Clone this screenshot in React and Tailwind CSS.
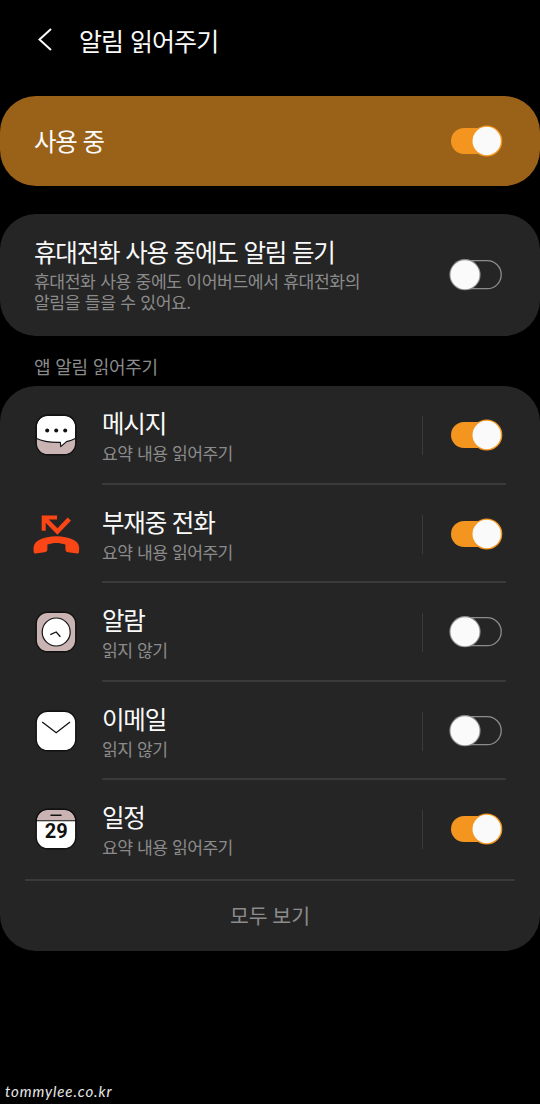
import React from 'react';

function Toggle({ on }) {
  return (
    <svg width="56" height="34" viewBox="0 0 56 34" className="block shrink-0">
      {on ? (
        <>
          <rect x="3" y="4" width="51" height="26" rx="13" fill="#f3951f" />
          <circle cx="38.7" cy="17" r="15.6" fill="#f3951f" />
          <circle cx="38.7" cy="17" r="14.2" fill="#fafafa" />
        </>
      ) : (
        <>
          <rect x="8" y="2.7" width="45.2" height="28" rx="14" fill="none" stroke="#8c8c8c" strokeWidth="1.3" />
          <circle cx="17" cy="16.7" r="15.6" fill="#8f8f8f" />
          <circle cx="17" cy="16.7" r="14.5" fill="#fafafa" />
        </>
      )}
    </svg>
  );
}

function MessageIcon() {
  return (
    <svg width="48" height="48" viewBox="0 0 48 48">
      <rect x="4.2" y="4.2" width="39.6" height="39.6" rx="11.5" fill="#c9b4b3" />
      <path d="M4.2 27.2V15.7a11.5 11.5 0 0 1 11.5-11.5h16.6a11.5 11.5 0 0 1 11.5 11.5v11.5c-3 1.6-6.1 2.7-9.3 3.4l-5.7 5-.5-4.3c-8.500.3-17.300-.7-24.300-4.100z" fill="#fff" stroke="#141414" strokeWidth="1.2" strokeLinejoin="round" />
      <rect x="4.2" y="4.2" width="39.6" height="39.6" rx="11.5" fill="none" stroke="#111" strokeWidth="1.4" />
      <circle cx="15.2" cy="19.5" r="2" fill="#111" />
      <circle cx="24.2" cy="19.5" r="2" fill="#111" />
      <circle cx="33.2" cy="19.5" r="2" fill="#111" />
    </svg>
  );
}

function MissedCallIcon() {
  return (
    <svg width="48" height="48" viewBox="0 0 48 48">
      <path d="M9.7 5.500H25v4H16.800L25.500 18.300 35.600 7.500 39 10.600 25.400 24.800 13.700 12.800V20.800H9.700z" fill="#fa4616" />
      <path d="M1.800 42c-.9-6.200.7-9.500 5.300-12 10-5 24.600-5 34.600 0 4.600 2.500 6.200 5.800 5.300 12-.1 1.200-1 1.700-2 1.500l-8.600-1.200c-2.300-.4-3-1.400-3-3.400V34.600c-5.700-2.200-12.300-2.200-18 0v4.300c0 2-.7 3-3 3.400L3.800 43.500c-1 .2-1.900-.3-2-1.500z" fill="#fa4616" />
    </svg>
  );
}

function AlarmIcon() {
  return (
    <svg width="48" height="48" viewBox="0 0 48 48">
      <rect x="4.2" y="4.2" width="39.6" height="39.6" rx="11.5" fill="#c9b4b3" stroke="#111" strokeWidth="1.4" />
      <circle cx="24.2" cy="24" r="14" fill="#fff" stroke="#111" strokeWidth="1.2" />
      <path d="M18.3 26.6l5.9-2.6 4.2 4.7" fill="none" stroke="#111" strokeWidth="1.3" />
    </svg>
  );
}

function MailIcon() {
  return (
    <svg width="48" height="48" viewBox="0 0 48 48">
      <rect x="4.2" y="4.2" width="39.6" height="39.6" rx="11.5" fill="#fff" stroke="#111" strokeWidth="1.4" />
      <path d="M10.2 15l14 10.8L38 15" fill="none" stroke="#111" strokeWidth="1.3" />
    </svg>
  );
}

function CalendarIcon() {
  return (
    <svg width="48" height="48" viewBox="0 0 48 48">
      <rect x="4.2" y="4.2" width="39.6" height="39.6" rx="11.5" fill="#fff" />
      <path d="M4.200 15.700a11.500 11.500 0 0 1 11.500-11.500h16.600a11.500 11.500 0 0 1 11.500 11.500z" fill="#c9b4b3" stroke="#111" strokeWidth="1.1" />
      <rect x="4.2" y="4.2" width="39.6" height="39.6" rx="11.5" fill="none" stroke="#111" strokeWidth="1.4" />
      <path d="M19 10.2h10" stroke="#111" strokeWidth="1.5" strokeLinecap="round" />
      <text x="24.2" y="32.600" textAnchor="middle" fontSize="20" fill="#111" className="font-['Roboto',sans-serif] font-bold">29</text>
    </svg>
  );
}

const rows = [
  { name: '메시지', note: '요약 내용 읽어주기', on: true, Icon: MessageIcon },
  { name: '부재중 전화', note: '요약 내용 읽어주기', on: true, Icon: MissedCallIcon },
  { name: '알람', note: '읽지 않기', on: false, Icon: AlarmIcon },
  { name: '이메일', note: '읽지 않기', on: false, Icon: MailIcon },
  { name: '일정', note: '요약 내용 읽어주기', on: true, Icon: CalendarIcon },
];

function AppRow({ name, note, on, Icon, last }) {
  return (
    <li className="flex h-[98.5px] pl-8">
      <div className="flex h-[98px] w-[70px] shrink-0 items-center"><Icon /></div>
      <div className={last ? 'mr-[34px] flex flex-1' : 'mr-[34px] flex flex-1 border-b-2 border-[#3a3a3a]'}>
        <div className="flex-1 pt-[21px]">
          <h2 className="text-[24.5px] leading-[32px] font-normal tracking-[-1.2px] [word-spacing:1.5px] text-[#fafafa]">{name}</h2>
          <p className="text-[17.2px] leading-[28px] tracking-[-0.65px] [word-spacing:1.5px] text-[#8b8b8b]">{note}</p>
        </div>
        <div className="mt-[30px] h-[39px] w-px bg-[#3b3b3b]" />
        <div className="mt-8 ml-[25px] w-[58px]"><Toggle on={on} /></div>
      </div>
    </li>
  );
}

export default function App() {
  return (
    <main className="flex h-[1104px] w-[540px] flex-col overflow-hidden bg-black font-['Noto_Sans_CJK_KR',sans-serif] text-[#fafafa]">
      <header className="flex h-[96px] shrink-0 items-start pt-[22px] pl-9">
        <svg width="18" height="36" viewBox="0 0 18 36" className="mr-[25px] block">
          <path d="M15 7L3.5 17.5L15 28" fill="none" stroke="#fafafa" strokeWidth="2" />
        </svg>
        <h1 className="text-[25px] leading-[36px] font-normal tracking-[-0.9px] [word-spacing:2px]">알림 읽어주기</h1>
      </header>

      <section className="flex h-[90px] shrink-0 items-center justify-between rounded-[36px] bg-[#9a6119] pr-9 pl-[34px]">
        <span className="text-[24.5px] leading-9 tracking-[-1.2px] [word-spacing:1.5px]">사용 중</span>
        <Toggle on />
      </section>

      <section className="mt-7 flex h-[122px] shrink-0 items-center justify-between rounded-[36px] bg-[#252525] pr-9 pl-[34px]">
        <div className="pb-[5px]">
          <h2 className="text-[24.5px] leading-[36px] font-normal tracking-[-1.2px] [word-spacing:1.5px]">휴대전화 사용 중에도 알림 듣기</h2>
          <p className="text-[17.2px] leading-[21px] tracking-[-0.45px] [word-spacing:1.3px] text-[#8b8b8b]">휴대전화 사용 중에도 이어버드에서 휴대전화의<br />알림을 들을 수 있어요.</p>
        </div>
        <Toggle on={false} />
      </section>

      <h3 className="h-[50px] shrink-0 pt-[16px] pl-[34px] text-[18px] leading-[28px] font-normal tracking-[-0.3px] [word-spacing:1.3px] text-[#8b8b8b]">앱 알림 읽어주기</h3>

      <section className="h-[565px] shrink-0 rounded-[36px] bg-[#252525]">
        <ul>
          {rows.map((row, i) => <AppRow key={row.name} {...row} last={i === rows.length - 1} />)}
        </ul>
        <div className="mx-[25px] flex h-[72px] items-center justify-center border-t-2 border-[#3a3a3a] text-[20.5px] text-[#8b8b8b]">모두 보기</div>
      </section>

      <footer className="mt-auto pb-[3px] pl-[5px] font-['Lato',sans-serif] text-[15px] leading-[20px] tracking-[0.9px] text-[#e8e8e8] italic">tommylee.co.kr</footer>
    </main>
  );
}
